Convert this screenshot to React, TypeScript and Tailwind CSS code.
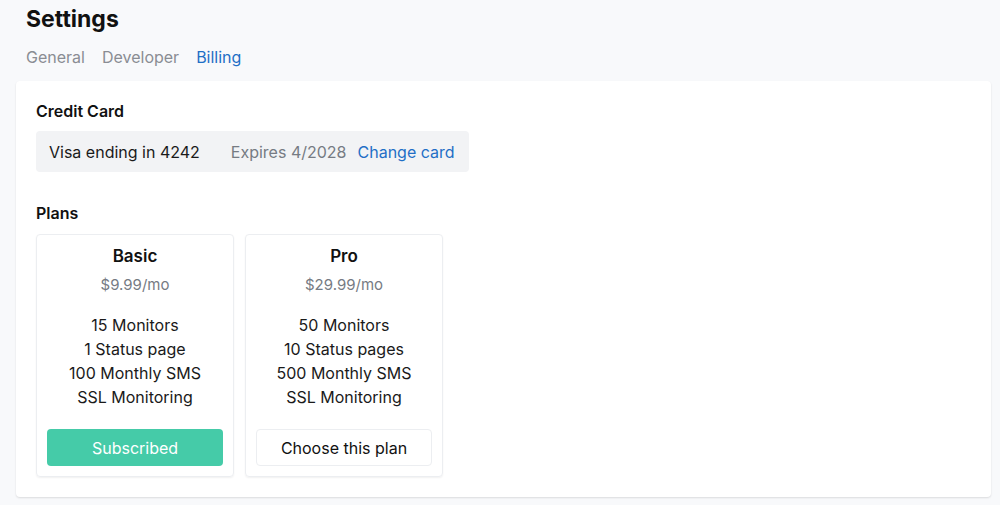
import React from "react";

const plans = [
  {
    name: "Basic",
    price: "$9.99/mo",
    features: ["15 Monitors", "1 Status page", "100 Monthly SMS", "SSL Monitoring"],
    subscribed: true,
  },
  {
    name: "Pro",
    price: "$29.99/mo",
    features: ["50 Monitors", "10 Status pages", "500 Monthly SMS", "SSL Monitoring"],
    subscribed: false,
  },
];

export default function App() {
  return (
    <div
      className="w-[1000px] h-[505px] bg-[#f8f9fb] overflow-hidden text-[#111]"
      style={{ fontFamily: "Inter, 'Noto Sans', sans-serif" }}
    >
      <div className="pl-[26px] pt-[5px]">
        <h1 className="text-[23px] font-bold leading-[28px]">Settings</h1>
        <div className="flex gap-[17px] mt-[14px] text-[16px] leading-[20px]">
          <span className="text-[#8a8d93]">General</span>
          <span className="text-[#8a8d93]">Developer</span>
          <span className="text-[#1f6fc6]">Billing</span>
        </div>
      </div>
      <div className="ml-[16px] mr-[9px] mt-[14px] h-[416px] bg-white rounded-[4px] shadow-[0_1px_2px_rgba(0,0,0,0.12)] px-[20px] pt-[20px]">
        <h2 className="text-[16px] font-semibold leading-[20px]">Credit Card</h2>
        <div className="mt-[10px] w-[433px] h-[41px] bg-[#f2f3f5] rounded-[4px] flex items-center pl-[13px] text-[16px]">
          <span className="text-[#1a1a1a]">Visa ending in 4242</span>
          <span className="ml-[31px] text-[#767b83]">Expires 4/2028</span>
          <span className="ml-[11px] text-[#1f6fc6]">Change card</span>
        </div>
        <h2 className="mt-[31px] text-[16px] font-semibold leading-[20px]">Plans</h2>
        <div className="flex gap-[11px] mt-[11px]">
          {plans.map((p) => (
            <div
              key={p.name}
              className="w-[198px] h-[243px] rounded-[4px] border border-[#eceef1] shadow-[0_1px_2px_rgba(0,0,0,0.06)] flex flex-col items-center pt-[10px] px-[10px]"
            >
              <div className="text-[17px] font-semibold leading-[22px]">{p.name}</div>
              <div className="mt-[8px] text-[15px] text-[#767b83] leading-[20px]">{p.price}</div>
              <div className="mt-[18px] flex flex-col items-center text-[16px] leading-[24px] text-[#1a1a1a]">
                {p.features.map((f) => (
                  <div key={f}>{f}</div>
                ))}
              </div>
              {p.subscribed ? (
                <div className="mt-[20px] w-[176px] h-[37px] rounded-[4px] bg-[#45cba8] text-white text-[16px] flex items-center justify-center">
                  Subscribed
                </div>
              ) : (
                <div className="mt-[20px] w-[176px] h-[37px] rounded-[4px] bg-white border border-[#eceef1] text-[#111] text-[16px] flex items-center justify-center">
                  Choose this plan
                </div>
              )}
            </div>
          ))}
        </div>
      </div>
    </div>
  );
}
